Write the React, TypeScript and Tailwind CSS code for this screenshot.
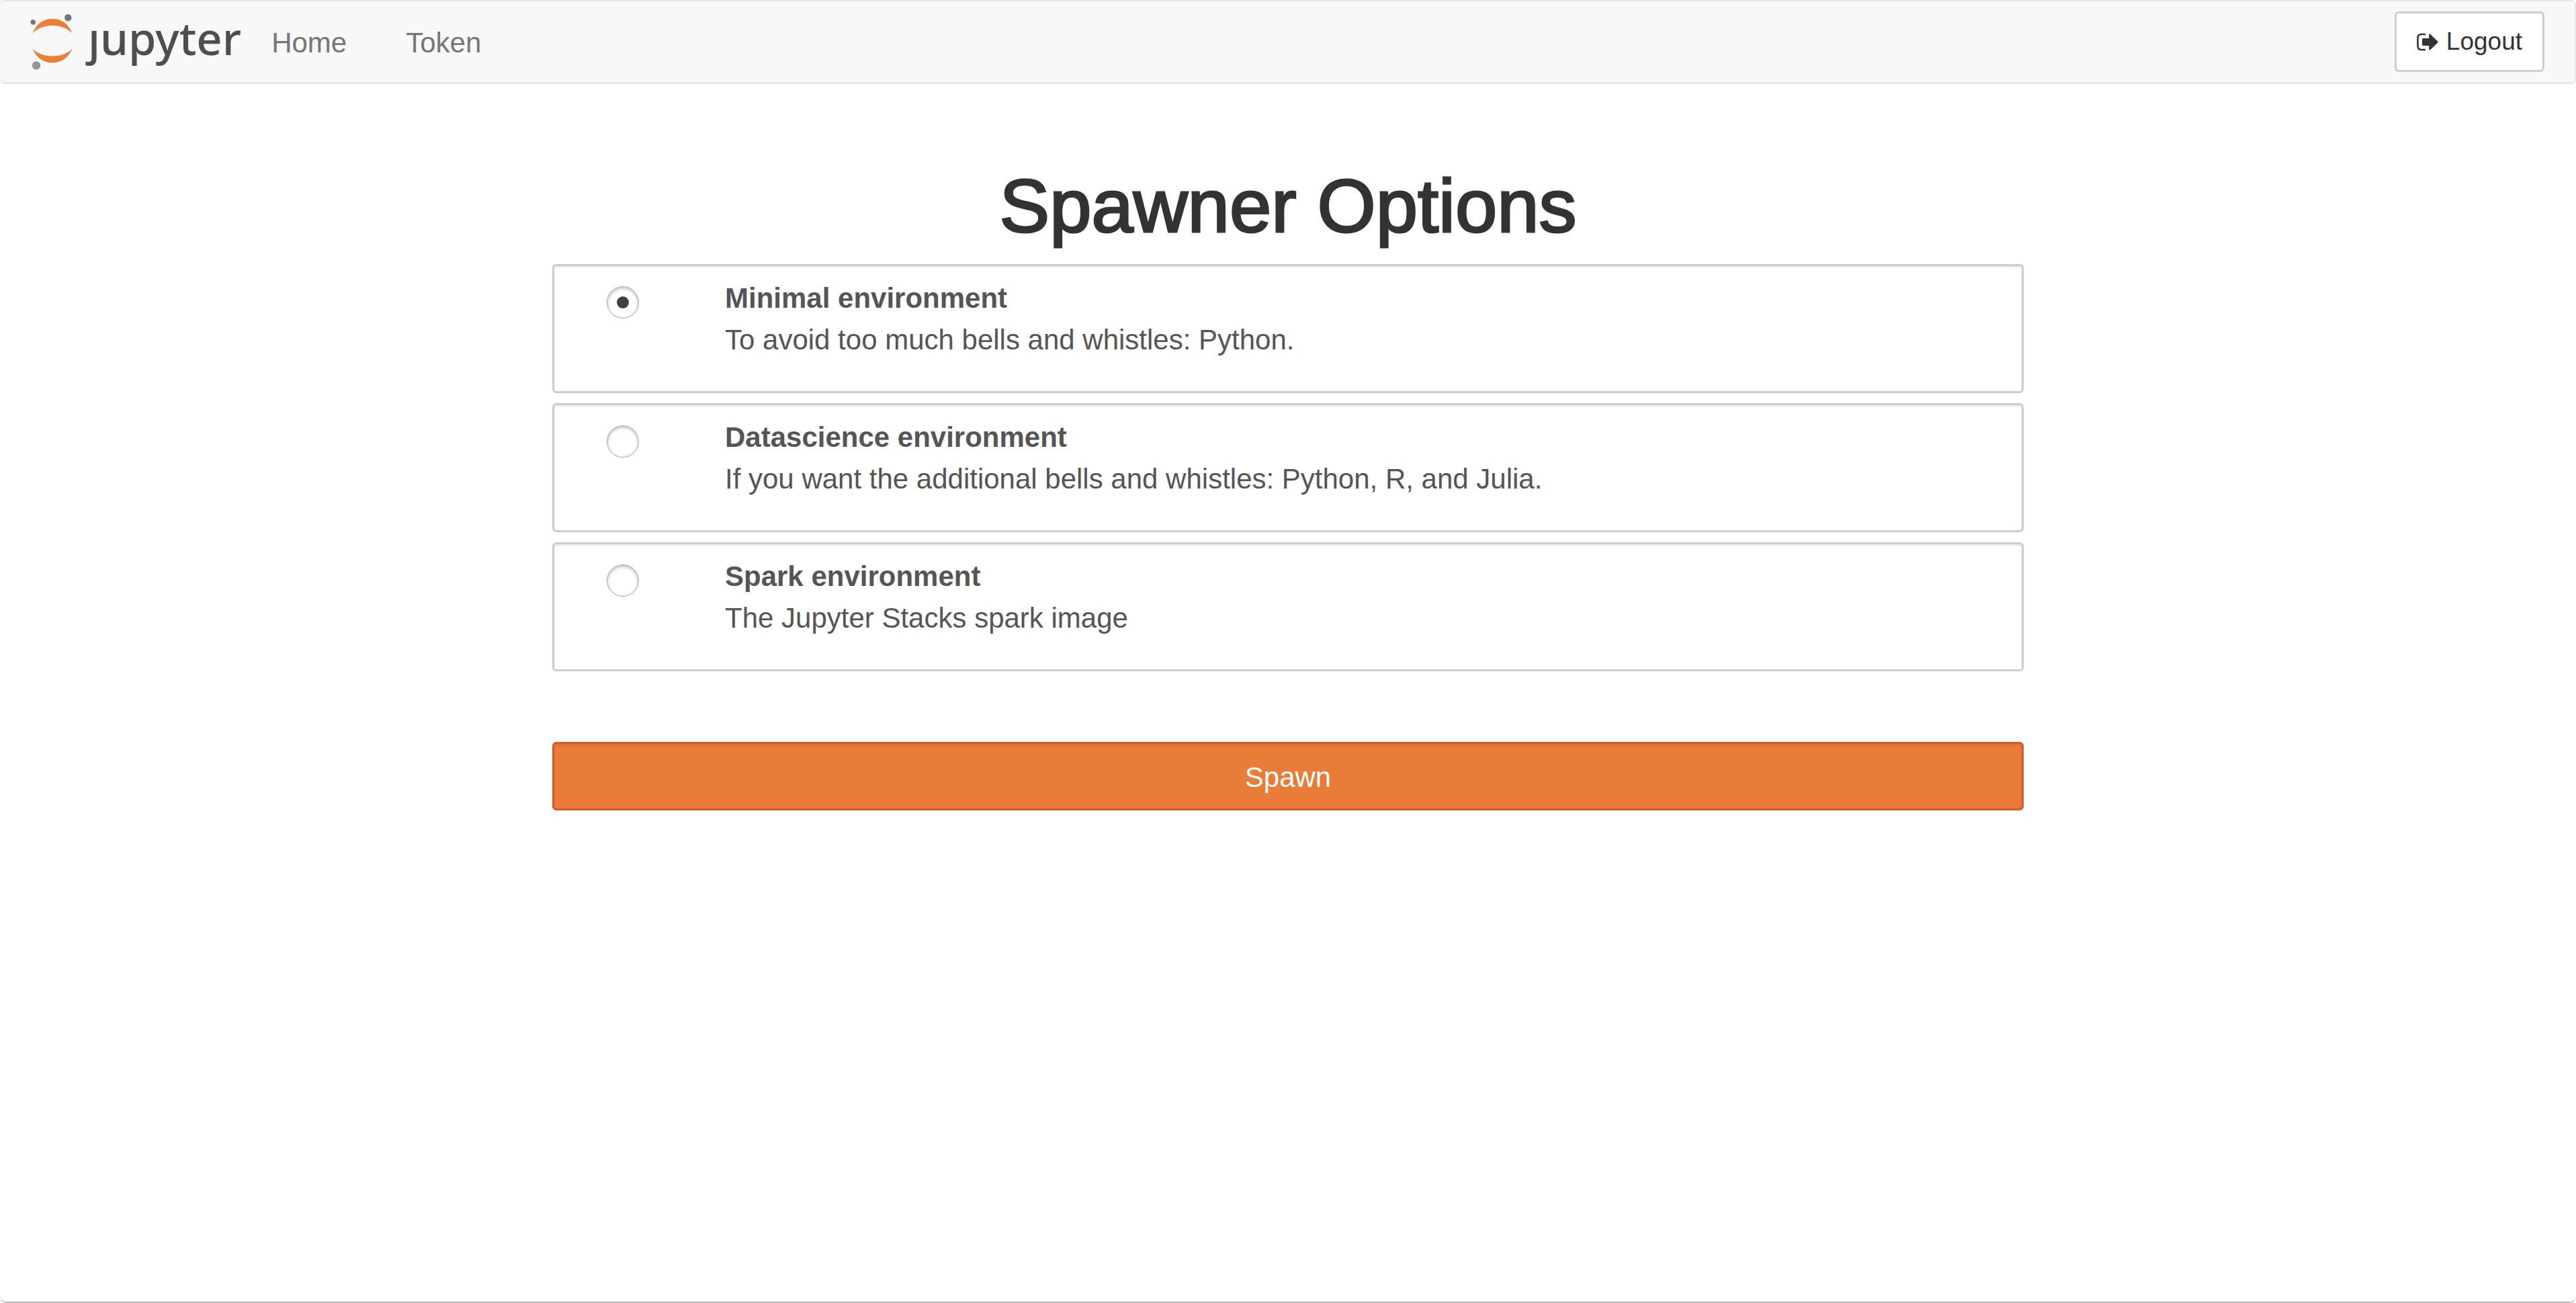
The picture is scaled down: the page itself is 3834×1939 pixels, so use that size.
import React, { useState } from "react";

const profiles = [
  { id: "minimal", name: "Minimal environment", description: "To avoid too much bells and whistles: Python." },
  {
    id: "datascience",
    name: "Datascience environment",
    description: "If you want the additional bells and whistles: Python, R, and Julia.",
  },
  { id: "spark", name: "Spark environment", description: "The Jupyter Stacks spark image" },
];

function JupyterMark() {
  return (
    <svg viewBox="0 0 64 86" className="h-[86px] w-16 shrink-0" aria-hidden="true">
      <path d="M3.500 30.500C9 16 20 9 33 9S57 16 62.500 30.500C55 23 45 19 33 19S11 23 3.500 30.500Z" fill="#e98038" />
      <path d="M3.500 53.500C9 67 20 74.500 33 74.500S57 67 62.500 53.500C55 61 45 64.500 33 64.500S11 61 3.500 53.500Z" fill="#e98038" />
      <circle cx="56.300" cy="7.300" r="5.200" fill="#767677" />
      <circle cx="4.200" cy="14" r="3.700" fill="#6d7473" />
      <circle cx="9" cy="78.500" r="6.200" fill="#989798" />
    </svg>
  );
}

function SignOutIcon() {
  return (
    <svg viewBox="0 0 32 27" className="h-[27px] w-8" aria-hidden="true">
      <path d="M13 2H7Q1.500 2 1.500 7.500V19.500Q1.500 25 7 25H13" fill="none" stroke="#333" strokeWidth="2.600" />
      <path
        d="M20 1.800 31.200 12.500Q32 13.500 31.200 14.500L20 25.200Q18.200 26.200 18.200 24.200V19H10Q8 19 8 17V10Q8 8 10 8H18.200V2.800Q18.200 0.800 20 1.800Z"
        fill="#333"
      />
    </svg>
  );
}

export default function App() {
  const [selected, setSelected] = useState("minimal");

  return (
    <div className="min-h-screen rounded-b-[10px] border-b-2 border-[#b4b4b4] bg-white font-['Liberation_Sans',Arial,sans-serif] text-[42px] leading-[62px] text-[#333]">
      <header className="flex items-center justify-between rounded-[6px] border-t-2 border-r-2 border-b-[3px] border-[#e7e7e7] bg-[#f8f8f8] px-[45px]">
        <div className="flex h-[120px] items-center">
          <a href="#home" className="flex items-center gap-[22px]" aria-label="jupyter">
            <JupyterMark />
            <span className="pb-3 font-['Noto_Sans',sans-serif] text-[67px] leading-[90px] font-medium text-[#4e4e4e]">ȷupyter</span>
          </a>
          <nav className="ml-[45px] flex gap-[88px] pt-[3px] text-[#777]">
            <a href="#home">Home</a>
            <a href="#token">Token</a>
          </nav>
        </div>
        <button
          type="button"
          className="flex h-[90px] items-center gap-3 rounded-[6px] border-[3px] border-[#ccc] bg-white px-[30px] text-[37px]"
        >
          <SignOutIcon />
          Logout
        </button>
      </header>

      <main className="mx-auto w-4/7 max-w-[2190px] pt-[120px]">
        <h1 className="pb-[24px] text-center text-[112px] leading-[124px] [-webkit-text-stroke:3px_#333]">Spawner Options</h1>
        <form onSubmit={(e) => e.preventDefault()}>
          <div role="radiogroup" aria-label="Spawner Options" className="flex flex-col gap-[15px] text-[#555]">
            {profiles.map((p) => (
              <label
                key={p.id}
                htmlFor={p.id}
                className="flex h-48 items-start rounded-[6px] border-[3px] border-[#ccc] bg-white pt-[17px] pl-[78px] shadow-[inset_0_3px_3px_rgba(0,0,0,0.075)]"
              >
                <input
                  id={p.id}
                  type="radio"
                  name="profile"
                  checked={selected === p.id}
                  onChange={() => setSelected(p.id)}
                  className="mt-[13px] flex size-12 shrink-0 appearance-none items-center justify-center rounded-full border border-[#a6a6a6] bg-white shadow-[inset_0_2px_5px_rgba(0,0,0,0.28)] before:size-[18px] before:rounded-full before:content-[''] checked:before:bg-[#404040]"
                />
                <span className="ml-[128px] flex flex-col">
                  <strong>{p.name}</strong>
                  <span>{p.description}</span>
                </span>
              </label>
            ))}
          </div>
          <button
            type="submit"
            className="mt-[105px] flex h-[102px] w-full items-center justify-center rounded-[6px] border-[3px] border-[#d9582b] bg-[#e87c38] pt-[3px] text-white shadow-[inset_0_3px_3px_rgba(0,0,0,0.075)]"
          >
            Spawn
          </button>
        </form>
      </main>
    </div>
  );
}
